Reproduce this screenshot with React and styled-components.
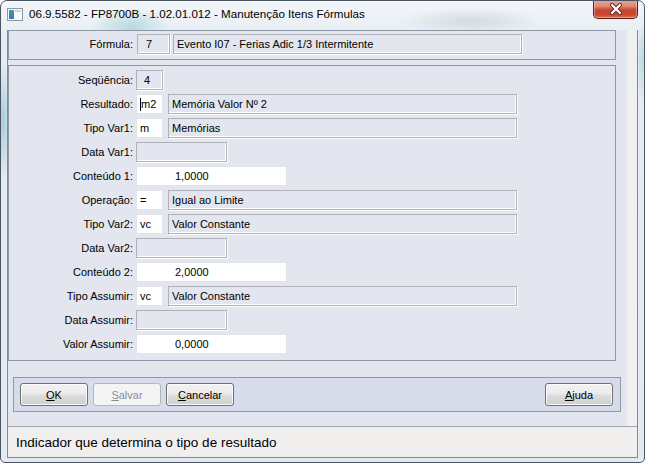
import React from 'react';
import styled, { createGlobalStyle } from 'styled-components';

const GlobalStyle = createGlobalStyle`
  html, body {
    margin: 0;
    padding: 0;
    background: #ffffff;
  }
  * {
    box-sizing: border-box;
  }
`;

const Window = styled.div`
  width: 645px;
  height: 463px;
  border: 1px solid #4a5563;
  border-radius: 7px 7px 5px 5px;
  display: flex;
  flex-direction: column;
  overflow: hidden;
  font-family: "Liberation Sans", Arial, sans-serif;
  background:
    radial-gradient(ellipse 40px 20px at 130px 26px, rgba(120, 190, 200, 0.45), transparent),
    radial-gradient(ellipse 70px 14px at 470px 20px, rgba(170, 175, 185, 0.35), transparent),
    radial-gradient(ellipse 8px 60px at 2px 120px, rgba(90, 170, 180, 0.45), transparent),
    radial-gradient(ellipse 8px 40px at 642px 60px, rgba(110, 180, 190, 0.35), transparent),
    linear-gradient(#f3f6f9, #e6ecf2 40px, #e4eaf0);
`;

const TitleBar = styled.div`
  height: 29px;
  flex: none;
  display: flex;
  align-items: flex-start;
  padding-left: 6px;
  padding-right: 6px;
`;

const TitleIcon = styled.svg`
  margin-top: 7px;
  flex: none;
`;

const TitleText = styled.div`
  margin-top: 6px;
  margin-left: 6px;
  font-size: 11.6px;
  color: #000;
  white-space: nowrap;
`;

const CloseButton = styled.div`
  margin-left: auto;
  margin-top: -1px;
  width: 45px;
  height: 19px;
  border: 1px solid #5a1f16;
  border-top: none;
  border-radius: 0 0 5px 5px;
  background: linear-gradient(#eaa79a 0%, #de8776 35%, #c9452f 55%, #c8462f 80%, #d8705a 100%);
  box-shadow: inset 0 0 0 1px rgba(255, 220, 210, 0.45);
  display: flex;
  align-items: center;
  justify-content: center;
`;

const Client = styled.div`
  flex: 1;
  margin: 0 6px 4px 6px;
  border: 1px solid #7f8b9a;
  border-top: none;
  display: flex;
  flex-direction: column;
`;

const Body = styled.div`
  flex: 1;
  display: flex;
`;

const MainCol = styled.div`
  width: 619px;
  background: #e3e6ee;
  display: flex;
  flex-direction: column;
  gap: 5px;
`;

const RightStrip = styled.div`
  flex: 1;
  background: #f0f0f0;
`;

const Panel = styled.div`
  width: 608px;
  border: 1px solid #8d98a7;
  padding: ${p => p.$pad};
`;

const ButtonPanel = styled.div`
  width: 608px;
  margin-top: 11px;
  margin-left: 5px;
  border: 1px solid #8d98a9;
  background: #d6dcea;
  padding: 5px 7px 5px 6px;
  display: flex;
  gap: 5px;
`;

const Rows = styled.div`
  display: flex;
  flex-direction: column;
  gap: 4px;
`;

const Row = styled.div`
  display: flex;
  align-items: center;
  height: 20px;
`;

const Label = styled.div`
  width: ${p => p.$w}px;
  text-align: right;
  font-size: 11px;
  color: #000;
  padding-right: ${p => p.$pr || 0}px;
`;

const Box = styled.div`
  width: ${p => p.$w}px;
  height: 20px;
  margin-left: ${p => p.$ml || 0}px;
  font-size: 11px;
  color: #000;
  display: flex;
  align-items: center;
  padding-left: ${p => p.$pl || 3}px;
  white-space: nowrap;
  overflow: hidden;
  background: ${p => (p.$ro ? '#e3e6ee' : '#ffffff')};
  border: 1px solid ${p => (p.$ro ? '#aeb2b8' : '#dfe4ea')};
  box-shadow: ${p => (p.$ro ? 'inset -1px -1px 0 #ffffff, 1px 1px 0 #ffffff' : 'none')};
`;

const Caret = styled.span`
  display: inline-block;
  width: 1px;
  height: 13px;
  background: #000;
`;

const Button = styled.div`
  width: 68px;
  height: 23px;
  border: 1px solid ${p => (p.$disabled ? '#b4b8bc' : '#707070')};
  border-radius: 3px;
  background: ${p =>
    p.$disabled
      ? '#f4f4f4'
      : 'linear-gradient(#f2f2f2 0%, #ebebeb 48%, #dddddd 52%, #cfcfcf 100%)'};
  box-shadow: inset 0 0 0 1px ${p => (p.$disabled ? '#f4f4f4' : '#fbfbfb')};
  font-size: 11px;
  color: ${p => (p.$disabled ? '#8d8d8d' : '#000')};
  display: flex;
  align-items: center;
  justify-content: center;
  margin-left: ${p => (p.$push ? 'auto' : '0')};

  u {
    text-decoration: underline;
  }
`;

const StatusBar = styled.div`
  height: 31px;
  flex: none;
  border-top: 1px solid #a3a7ad;
  background: #f0efee;
  display: flex;
  align-items: center;
  padding-left: 8px;
  font-size: 13.5px;
  color: #000;
`;

const rows = [
  { label: 'Seqüência:', code: '4', ro: true, pl: 7 },
  { label: 'Resultado:', code: 'm2', desc: 'Memória Valor Nº 2', caret: true },
  { label: 'Tipo Var1:', code: 'm', desc: 'Memórias' },
  { label: 'Data Var1:', date: true },
  { label: 'Conteúdo 1:', num: '1,0000' },
  { label: 'Operação:', code: '=', desc: 'Igual ao Limite' },
  { label: 'Tipo Var2:', code: 'vc', desc: 'Valor Constante' },
  { label: 'Data Var2:', date: true },
  { label: 'Conteúdo 2:', num: '2,0000' },
  { label: 'Tipo Assumir:', code: 'vc', desc: 'Valor Constante' },
  { label: 'Data Assumir:', date: true },
  { label: 'Valor Assumir:', num: '0,0000' },
];

const FieldRow = ({ r }) => (
  <Row>
    <Label $w={127} $pr={3}>{r.label}</Label>
    {r.date && <Box $w={91} $ro />}
    {r.num && <Box $w={151} $pl={38}>{r.num}</Box>}
    {r.code && (
      <Box $w={27} $ro={r.ro} $pl={r.pl}>
        {r.caret && <Caret />}
        {r.code}
      </Box>
    )}
    {r.desc && <Box $w={349} $ml={5} $ro>{r.desc}</Box>}
  </Row>
);

const App = () => (
  <>
    <GlobalStyle />
    <Window>
      <TitleBar>
        <TitleIcon width="16" height="13" viewBox="0 0 16 13">
          <defs>
            <linearGradient id="ic" x1="0" y1="0" x2="0" y2="1">
              <stop offset="0" stopColor="#3a9fb0" />
              <stop offset="1" stopColor="#4a6fb0" />
            </linearGradient>
          </defs>
          <rect x="0.5" y="0.5" width="15" height="12" fill="#f7f9fb" stroke="#8a96a4" />
          <rect x="2" y="2" width="5" height="9" fill="url(#ic)" />
          <rect x="8" y="2" width="6" height="2" fill="#c8d4e0" />
        </TitleIcon>
        <TitleText>06.9.5582 - FP8700B - 1.02.01.012 - Manutenção Itens Fórmulas</TitleText>
        <CloseButton>
          <svg width="14" height="12" viewBox="0 0 14 12">
            <path d="M3 2 L11 10 M11 2 L3 10" stroke="#5b2a24" strokeWidth="4" strokeLinecap="round" />
            <path d="M3 2 L11 10 M11 2 L3 10" stroke="#ffffff" strokeWidth="2.2" strokeLinecap="round" />
          </svg>
        </CloseButton>
      </TitleBar>
      <Client>
        <Body>
          <MainCol>
            <Panel $pad="3px 0 5px 0">
              <Row>
                <Label $w={128} $pr={4}>Fórmula:</Label>
                <Box $w={33} $ro $pl={8}>7</Box>
                <Box $w={349} $ml={3} $ro>Evento I07 - Ferias Adic 1/3 Intermitente</Box>
              </Row>
            </Panel>
            <Panel $pad="4px 0 6px 0">
              <Rows>
                {rows.map(r => (
                  <FieldRow key={r.label} r={r} />
                ))}
              </Rows>
            </Panel>
            <ButtonPanel>
              <Button><span><u>O</u>K</span></Button>
              <Button $disabled><span><u>S</u>alvar</span></Button>
              <Button><span><u>C</u>ancelar</span></Button>
              <Button $push><span><u>A</u>juda</span></Button>
            </ButtonPanel>
          </MainCol>
          <RightStrip />
        </Body>
        <StatusBar>Indicador que determina o tipo de resultado</StatusBar>
      </Client>
    </Window>
  </>
);

export default App;
